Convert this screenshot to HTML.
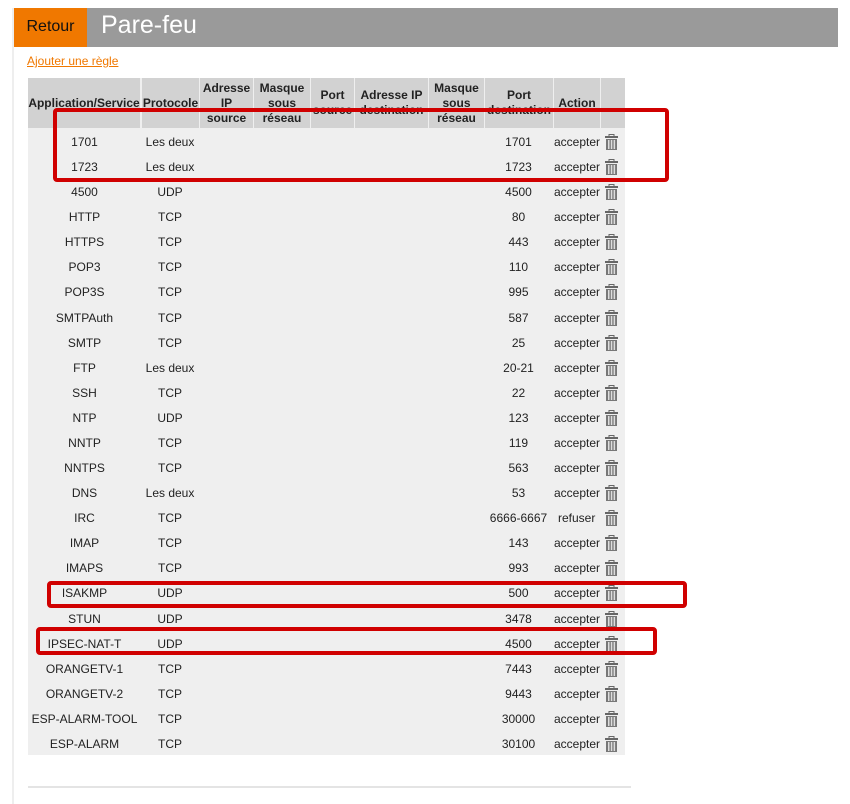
<!DOCTYPE html>
<html><head><meta charset="utf-8"><style>
*{margin:0;padding:0;box-sizing:border-box}
body{width:850px;height:804px;background:#fff;font-family:"Liberation Sans",Arial,sans-serif;position:relative;overflow:hidden;color:#222}
.a{position:absolute}
.vl{position:absolute;left:12px;top:8px;width:2px;height:796px;background:#eee}
.hdr{left:14px;top:8px;width:824px;height:39px;background:#9a9a9a}
.ret{left:14px;top:8px;width:73px;height:39px;background:#f07800;color:#111;font-size:16px;line-height:37px;text-align:center}
.tit{left:101px;top:8px;line-height:34px;font-size:25px;color:#fff}
.add{left:27px;top:54px;font-size:12px;color:#f07800;text-decoration:underline}
.tb{left:28px;top:78px;width:597px;height:677px;background:#efefef}
.th{position:absolute;top:78px;height:50px;background:#d2d2d2;font-size:12px;font-weight:bold;text-align:center;display:flex;align-items:center;justify-content:center;line-height:15px;color:#222}
.row{position:absolute;left:28px;width:597px;height:25px;font-size:12px;line-height:25px}
.row span{position:absolute;top:0}
.c1{left:0;width:113px;text-align:center}
.c2{left:113px;width:58px;text-align:center}
.c8{left:456px;width:69px;text-align:center}
.c9{left:526px}
.tr{left:577px;top:4px!important;width:13px;height:16px}
.red{position:absolute;border:4px solid #d00000;border-radius:4px}
</style></head><body>
<div class="vl"></div>
<div class="a hdr"></div><div class="a ret">Retour</div><div class="a tit">Pare-feu</div>
<div class="a add">Ajouter une règle</div>
<div class="a tb"></div>
<div class="th" style="left:28px;width:112px">Application/Service</div>
<div class="th" style="left:142px;width:57px">Protocole</div>
<div class="th" style="left:200px;width:53px">Adresse IP<br>source</div>
<div class="th" style="left:254px;width:56px">Masque sous réseau</div>
<div class="th" style="left:311px;width:43px">Port source</div>
<div class="th" style="left:355px;width:73px">Adresse IP destination</div>
<div class="th" style="left:429px;width:55px">Masque sous réseau</div>
<div class="th" style="left:485px;width:68px">Port destination</div>
<div class="th" style="left:554px;width:46px">Action</div>
<div class="th" style="left:601px;width:24px"></div>
<div id="rows"></div>
<script>
var d=[["1701","Les deux","1701"],["1723","Les deux","1723"],["4500","UDP","4500"],["HTTP","TCP","80"],["HTTPS","TCP","443"],["POP3","TCP","110"],["POP3S","TCP","995"],["SMTPAuth","TCP","587"],["SMTP","TCP","25"],["FTP","Les deux","20-21"],["SSH","TCP","22"],["NTP","UDP","123"],["NNTP","TCP","119"],["NNTPS","TCP","563"],["DNS","Les deux","53"],["IRC","TCP","6666-6667","refuser"],["IMAP","TCP","143"],["IMAPS","TCP","993"],["ISAKMP","UDP","500"],["STUN","UDP","3478"],["IPSEC-NAT-T","UDP","4500"],["ORANGETV-1","TCP","7443"],["ORANGETV-2","TCP","9443"],["ESP-ALARM-TOOL","TCP","30000"],["ESP-ALARM","TCP","30100"]];
var tr='<svg class="tr" viewBox="0 0 13 16"><rect x="4" y="0.5" width="5" height="2" fill="none" stroke="#666" stroke-width="1"/><rect x="0" y="2" width="13" height="2" fill="#666"/><rect x="1" y="5" width="11" height="11" fill="#777"/><rect x="3" y="6" width="1.5" height="9" fill="#ddd"/><rect x="5.8" y="6" width="1.5" height="9" fill="#ddd"/><rect x="8.6" y="6" width="1.5" height="9" fill="#ddd"/></svg>';
var h='';d.forEach(function(r,i){var y=130+i*25.08;h+='<div class="row" style="top:'+y+'px"><span class="c1">'+r[0]+'</span><span class="c2">'+r[1]+'</span><span class="c8">'+r[2]+'</span><span class="c9"'+(r[3]?' style="left:530px"':'')+'>'+(r[3]||'accepter')+'</span><span class="tr" style="position:absolute">'+tr+'</span></div>';});
document.getElementById('rows').innerHTML=h;
</script>
<div class="red" style="left:53px;top:108px;width:616px;height:74px"></div>
<div class="red" style="left:47px;top:581px;width:640px;height:27px"></div>
<div class="red" style="left:36px;top:627px;width:621px;height:28px"></div>
<div class="a" style="left:28px;top:786px;width:603px;height:2px;background:#e4e4e4"></div>
</body></html>
